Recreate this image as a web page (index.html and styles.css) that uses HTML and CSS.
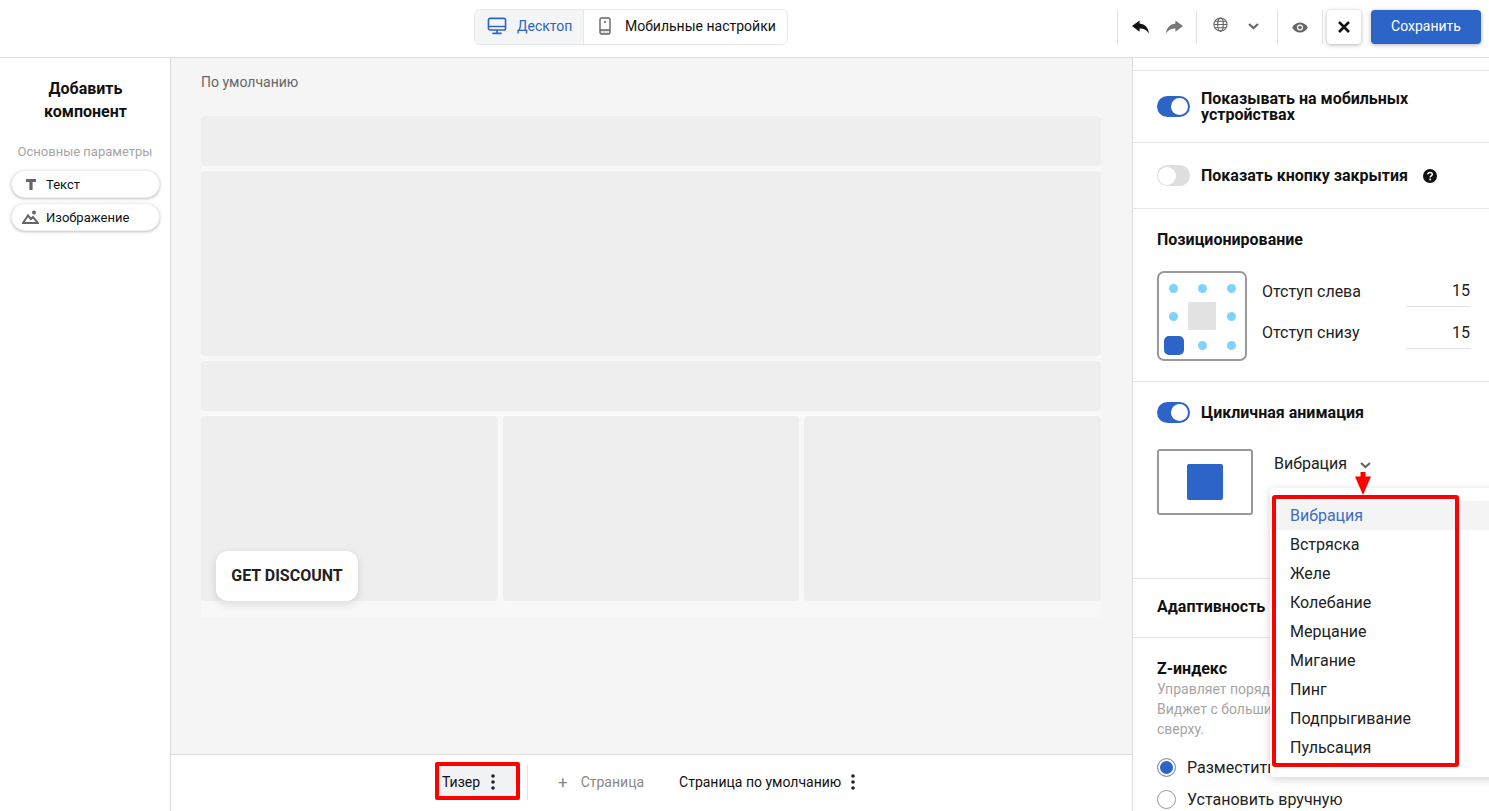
FILE: index.html
```html
<!DOCTYPE html>
<html lang="ru">
<head>
<meta charset="utf-8">
<title>Редактор</title>
<link rel="stylesheet" href="styles.css">
</head>
<body>
<div class="app">
  <header class="topbar">
    <div class="tabs">
      <div class="tab tab-active">
        <svg class="tab-icon" viewBox="0 0 22 20"><path d="M3.5 1.5h15a2 2 0 0 1 2 2v9a2 2 0 0 1-2 2h-15a2 2 0 0 1-2-2v-9a2 2 0 0 1 2-2zM1.500 10.500h19M11 14.500v3M6.500 18.200h9" fill="none" stroke="#2d64c8" stroke-width="1.800" stroke-linecap="round"/></svg>
        <span>Десктоп</span>
      </div>
      <div class="tab tab-mobile">
        <svg class="tab-icon-m" viewBox="0 0 12 18"><path d="M1 13h10v2.500A1.500 1.500 0 0 1 9.500 17h-7A1.500 1.500 0 0 1 1 15.500z" fill="#ddd"/><path d="M2.500 1h7A1.500 1.500 0 0 1 11 2.500v13A1.500 1.500 0 0 1 9.500 17h-7A1.500 1.500 0 0 1 1 15.500v-13A1.500 1.500 0 0 1 2.500 1zM1 13h10" fill="none" stroke="#666" stroke-width="1.400"/><circle cx="6" cy="5" r="1" fill="#555"/></svg>
        <span>Мобильные настройки</span>
      </div>
    </div>
    <div class="tools">
      <div class="tool-group tool-undo">
        <svg class="ic-arrow" viewBox="0 0 18 14"><path d="M8 0 0 6l8 6V8.600c4 0 7.300 1 10 5.400-.5-6-4-10-10-10.800z" fill="#111"/></svg>
        <svg class="ic-arrow" viewBox="0 0 18 14"><path d="M10 0l8 6-8 6V8.600c-4 0-7.300 1-10 5.400 .5-6 4-10 10-10.800z" fill="#777"/></svg>
      </div>
      <div class="tool-group tool-lang">
        <svg class="ic-globe" viewBox="0 0 16 16"><g fill="none" stroke="#666" stroke-width="1.200"><circle cx="8" cy="8" r="7"/><ellipse cx="8" cy="8" rx="3" ry="7"/><path d="M1 8h14M2 4.500h12M2 11.500h12"/></g></svg>
        <svg class="ic-chev ic-chev-top" viewBox="0 0 11 7"><path d="M1 1l4.500 4L10 1" fill="none" stroke="#666" stroke-width="2.200"/></svg>
      </div>
      <div class="tool-group tool-eye">
        <svg class="ic-eye" viewBox="0 0 18 12"><path d="M9 .5C5 .5 2 3 .5 6 2 9 5 11.500 9 11.500S16 9 17.500 6C16 3 13 .5 9 .5z" fill="#666"/><circle cx="9" cy="6" r="3.300" fill="#fff"/><circle cx="9" cy="6" r="2" fill="#666"/></svg>
      </div>
      <div class="tool-group tool-end"></div>
      <button class="close-btn"><svg viewBox="0 0 12 12"><path d="M1 1l10 10M11 1L1 11" stroke="#111" stroke-width="2.600" fill="none"/></svg></button>
      <button class="save-btn">Сохранить</button>
    </div>
  </header>

  <div class="main">
    <aside class="sidebar">
      <h2 class="side-title">Добавить компонент</h2>
      <div class="side-sub">Основные параметры</div>
      <div class="pill">
        <svg class="pill-ic-t" viewBox="0 0 10 11"><path d="M0 0h10v3H6.600v8H3.400V3H0z" fill="#666"/></svg>
        <span>Текст</span>
      </div>
      <div class="pill">
        <svg class="pill-ic-i" viewBox="0 0 17 14"><path d="M1 13 6 5.500l3 3.500 2-2 5 6z" fill="none" stroke="#666" stroke-width="2"/><circle cx="12" cy="2.500" r="2" fill="#666"/></svg>
        <span>Изображение</span>
      </div>
    </aside>

    <section class="center">
      <div class="canvas">
        <div class="canvas-label">По умолчанию</div>
        <div class="preview">
          <div class="block b-50"></div>
          <div class="block b-185"></div>
          <div class="block b-50"></div>
          <div class="cols">
            <div class="block"></div>
            <div class="block"></div>
            <div class="block"></div>
          </div>
          <div class="teaser">GET DISCOUNT</div>
        </div>
      </div>
      <footer class="pagebar">
        <div class="pb-teaser">
          <span>Тизер</span>
          <svg class="dots" viewBox="0 0 4 16"><circle cx="2" cy="2" r="1.800"/><circle cx="2" cy="8" r="1.800"/><circle cx="2" cy="14" r="1.800"/></svg>
        </div>
        <div class="pb-sep"></div>
        <div class="pb-add"><span class="pb-plus">+</span><span>Страница</span></div>
        <div class="pb-default">
          <span>Страница по умолчанию</span>
          <svg class="dots" viewBox="0 0 4 16"><circle cx="2" cy="2" r="1.800"/><circle cx="2" cy="8" r="1.800"/><circle cx="2" cy="14" r="1.800"/></svg>
        </div>
      </footer>
    </section>

    <aside class="panel">
      <div class="sec sec-top"></div>
      <div class="sec sec-mobile">
        <div class="toggle on"></div>
        <div class="sec-label">Показывать на мобильных устройствах</div>
      </div>
      <div class="sec sec-close">
        <div class="toggle off"></div>
        <div class="sec-label nowrap">Показать кнопку закрытия</div>
        <svg class="help" viewBox="0 0 14 14"><circle cx="7" cy="7" r="7" fill="#111"/><path d="M4.800 5.400C4.900 4.100 5.800 3.400 7 3.400c1.300 0 2.300.8 2.300 1.900 0 1.700-2.100 1.600-2.100 3.100" fill="none" stroke="#fff" stroke-width="1.500"/><circle cx="7.200" cy="10.500" r="1" fill="#fff"/></svg>
      </div>
      <div class="sec sec-pos">
        <div class="sec-title">Позиционирование</div>
        <div class="pos-row">
          <div class="pos-grid">
            <i class="dot"></i><i class="dot"></i><i class="dot"></i>
            <i class="dot"></i><i class="pos-center"></i><i class="dot"></i>
            <i class="dot-active"></i><i class="dot"></i><i class="dot"></i>
          </div>
          <div class="pos-fields">
            <div class="field"><span>Отступ слева</span><span class="field-val">15</span></div>
            <div class="field"><span>Отступ снизу</span><span class="field-val">15</span></div>
          </div>
        </div>
      </div>
      <div class="sec sec-anim">
        <div class="anim-head">
          <div class="toggle on"></div>
          <div class="sec-label">Цикличная анимация</div>
        </div>
        <div class="anim-row">
          <div class="anim-preview"><div class="anim-square"></div></div>
          <div class="anim-select">
            <span>Вибрация</span>
            <svg class="ic-chev" viewBox="0 0 11 7"><path d="M1 1l4.500 4L10 1" fill="none" stroke="#666" stroke-width="2.200"/></svg>
          </div>
        </div>
      </div>
      <div class="sec sec-adapt"><div class="sec-title">Адаптивность</div></div>
      <div class="sec-z">
        <div class="sec-title">Z-индекс</div>
        <div class="z-desc">Управляет порядком наложения.<br>Виджет с большим индексом будет<br>сверху.</div>
        <div class="radio-row"><i class="radio checked"></i><span>Разместить поверх всех</span></div>
        <div class="radio-row"><i class="radio"></i><span>Установить вручную</span></div>
      </div>

      <div class="dropdown">
        <div class="dd-item dd-active">Вибрация</div>
        <div class="dd-item">Встряска</div>
        <div class="dd-item">Желе</div>
        <div class="dd-item">Колебание</div>
        <div class="dd-item">Мерцание</div>
        <div class="dd-item">Мигание</div>
        <div class="dd-item">Пинг</div>
        <div class="dd-item">Подпрыгивание</div>
        <div class="dd-item">Пульсация</div>
      </div>
      <div class="red-box"></div>
      <svg class="red-arrow" viewBox="0 0 16 23"><path d="M5.500 0h5v4.500H16L8 23 0 4.500h5.500z" fill="#f00"/></svg>
    </aside>
  </div>
  <div class="red-teaser"></div>
</div>
</body>
</html>
```

FILE: styles.css
```css
* { box-sizing: border-box; }
html, body { margin: 0; height: 100%; overflow: hidden; }
body { font-family: Roboto, "Liberation Sans", sans-serif; color: #111; background: #fff; }
.app { position: relative; width: 1489px; height: 811px; display: flex; flex-direction: column; }

.topbar { height: 58px; flex: none; display: flex; align-items: flex-start; border-bottom: 1px solid #ddd; position: relative; }
.tabs { position: absolute; left: 474px; top: 9px; width: 314px; height: 36px; display: flex; border: 1px solid #e8e8e8; border-radius: 6px; overflow: hidden; font-size: 14px; background: #fff; }
.tab { display: flex; align-items: center; height: 100%; padding-bottom: 2px; }
.tab-active { width: 109px; background: #f4f5f7; border-right: 1px solid #e8e8e8; color: #2d64c8; padding-left: 12px; gap: 10px; }
.tab-icon { width: 20px; height: 18px; }
.tab-mobile { padding-left: 15px; gap: 14px; color: #111; }
.tab-icon-m { width: 12px; height: 18px; }

.tools { position: absolute; left: 1117px; top: 0; right: 0; height: 57px; display: flex; align-items: flex-start; }
.tool-group { height: 34px; margin-top: 10px; display: flex; align-items: center; border-left: 1px solid #e2e2e2; }
.tool-undo { width: 79px; padding-left: 14px; gap: 17px; }
.ic-arrow { width: 17px; height: 14px; margin-top: -1px; }
.tool-lang { width: 81px; padding-left: 16px; gap: 20px; }
.ic-globe { width: 15px; height: 15px; margin-top: -5px; }
.ic-chev { width: 11px; height: 7px; }
.ic-chev-top { margin-top: -2px; }
.tool-eye { width: 45px; padding-left: 13px; }
.ic-eye { width: 18px; height: 11px; }
.tool-end { width: 1px; }
.close-btn { width: 34px; height: 34px; margin-top: 10px; margin-left: 4px; padding: 0; border: 0; background: #fff; border-radius: 4px; box-shadow: 0 1px 4px rgba(0,0,0,.3); display: flex; align-items: center; justify-content: center; }
.close-btn svg { width: 12px; height: 12px; }
.save-btn { width: 110px; height: 34px; margin-top: 10px; margin-left: 10px; border: 0; background: #2d64c8; color: #fff; font: 14px Roboto, sans-serif; border-radius: 4px; box-shadow: 0 1px 4px rgba(0,0,0,.3); padding-bottom: 3px; }

.main { flex: 1; min-height: 0; display: flex; }
.sidebar { width: 171px; flex: none; border-right: 1px solid #ddd; padding: 19px 10px 0 11px; background: #fff; }
.side-title { margin: 0 auto; width: 120px; text-align: center; font-size: 16px; line-height: 23px; font-weight: 700; }
.side-sub { margin-top: 20px; margin-left: -1px; font-size: 13px; line-height: 18px; color: #a5a5a5; text-align: center; white-space: nowrap; }
.pill { width: 149px; height: 28px; margin-top: 5px; border: 1px solid #eee; border-radius: 14px; background: #fff; box-shadow: 0 1px 3px rgba(0,0,0,.25); display: flex; align-items: center; font-size: 13px; }
.side-sub + .pill { margin-top: 9px; }
.pill-ic-t { width: 10px; height: 11px; margin-left: 14px; margin-right: 10px; }
.pill-ic-i { width: 17px; height: 14px; margin-left: 10px; margin-right: 7px; }

.center { flex: 1; min-width: 0; display: flex; flex-direction: column; background: #f5f5f5; }
.canvas { flex: 1; padding: 16px 30px 0; min-height: 0; }
.canvas-label { font-size: 14px; line-height: 17px; color: #666; }
.preview { position: relative; margin-top: 25px; width: 900px; height: 501px; background: #f8f8f8; display: flex; flex-direction: column; gap: 5px; }
.block { background: #eee; border-radius: 4px; }
.b-50 { height: 50px; }
.b-185 { height: 185px; }
.cols { display: grid; grid-template-columns: 297px 296px 297px; gap: 5px; height: 185px; }
.teaser { position: absolute; left: 15px; top: 435px; width: 142px; height: 50px; padding-bottom: 2px; background: #fff; border-radius: 12px; box-shadow: 0 3px 10px rgba(0,0,0,.12); display: flex; align-items: center; justify-content: center; font-size: 16px; font-weight: 700; color: #222; }

.pagebar { height: 57px; flex: none; background: #fff; border-top: 1px solid #ddd; display: flex; align-items: center; font-size: 14px; padding-left: 265px; padding-bottom: 2px; }
.pb-teaser { width: 84px; height: 35px; background: #f1f2f4; display: flex; align-items: center; padding-left: 6px; gap: 10px; }
.dots { width: 6px; height: 16px; fill: #222; }
.pb-sep { width: 1px; height: 35px; background: #e2e2e2; margin-left: 7px; }
.pb-add { margin-left: 30px; display: flex; align-items: center; gap: 13px; color: #888; }
.pb-plus { font-size: 17px; line-height: 1; }
.pb-default { margin-left: 35px; display: flex; align-items: center; gap: 9px; }

.panel { position: relative; width: 357px; flex: none; background: #fff; border-left: 1px solid #ddd; overflow: hidden; }
.sec { border-bottom: 1px solid #e6e6e6; padding-left: 24px; }
.sec-top { height: 13px; }
.sec-mobile { height: 72px; display: flex; align-items: center; }
.sec-close { height: 66px; display: flex; align-items: center; }
.sec-label { width: 230px; margin-left: 11px; font-size: 16px; line-height: 16px; font-weight: 700; }
.nowrap { width: auto; white-space: nowrap; }
.help { width: 14px; height: 14px; margin-left: 15px; margin-top: 1px; }
.toggle { position: relative; width: 33px; height: 21px; border-radius: 11px; flex: none; }
.toggle::after { content: ""; position: absolute; top: 2px; width: 17px; height: 17px; border-radius: 50%; background: #fff; }
.toggle.on { background: #2d64c8; }
.toggle.on::after { right: 2px; }
.toggle.off { background: #dedede; }
.toggle.off::after { left: 1px; width: 18px; height: 18px; top: 1.5px; }

.sec-pos { height: 173px; padding-top: 22px; }
.sec-title { font-size: 16px; line-height: 18px; font-weight: 700; }
.pos-row { display: flex; margin-top: 22px; }
.pos-grid { width: 90px; height: 90px; border: 2px solid #999; border-radius: 7px; padding-top: 1px; display: grid; grid-template-columns: repeat(3, 29px); grid-template-rows: repeat(3, 28.5px); justify-items: center; align-items: center; }
.dot { width: 9px; height: 9px; border-radius: 50%; background: #7dd3fc; }
.pos-center { width: 28px; height: 28px; margin: -1px 0 0 -1px; background: #e2e2e2; }
.dot-active { width: 20px; height: 19px; border-radius: 5px; background: #2d64c8; }
.pos-fields { margin-left: 15px; width: 208px; }
.field { display: flex; justify-content: space-between; align-items: center; height: 42px; font-size: 16px; color: #222; position: relative; padding-top: 8px; }
.field:first-child { height: 36px; padding-top: 3px; }
.field span:first-child { padding-top: 1px; }
.field-val { width: 64px; text-align: right; }
.field::after { content: ""; position: absolute; right: 0; bottom: 0; width: 64px; height: 1px; background: #e2e2e2; }

.sec-anim { height: 197px; padding-top: 20px; }
.anim-head { display: flex; align-items: center; }
.anim-row { display: flex; margin-top: 26px; }
.anim-preview { width: 96px; height: 66px; border: 2px solid #999; border-radius: 3px; display: flex; align-items: center; justify-content: center; }
.anim-square { width: 36px; height: 36px; background: #2d64c8; border-radius: 2px; }
.anim-select { margin-left: 21px; margin-top: 4px; font-size: 16px; display: flex; align-items: center; gap: 13px; height: 20px; color: #222; }
.anim-select .ic-chev { margin-top: 4px; }

.sec-adapt { height: 59px; padding-top: 19px; }
.sec-z { padding: 22px 0 0 24px; }
.z-desc { margin-top: 1px; font-size: 14px; line-height: 20px; color: #a5a5a5; white-space: nowrap; }
.radio-row { display: flex; align-items: center; gap: 11px; font-size: 16px; height: 20px; margin-top: 12px; white-space: nowrap; color: #222; }
.z-desc + .radio-row { margin-top: 18px; }
.radio { width: 19px; height: 19px; border: 1px solid #999; border-radius: 50%; background: #fff; flex: none; }
.radio.checked { background: #2d64c8; box-shadow: inset 0 0 0 2px #fff; }

.dropdown { position: absolute; left: 137px; top: 430px; width: 240px; height: 289px; background: #fff; border-radius: 4px; box-shadow: 0 2px 8px rgba(0,0,0,.18); padding-top: 13px; }
.dd-item { height: 29px; padding-left: 20px; font-size: 16px; line-height: 29px; color: #222; }
.dd-active { background: #f4f4f4; color: #3c6cc4; }
.red-box { position: absolute; left: 139px; top: 437px; width: 187px; height: 272px; border: 4px solid #f00; border-radius: 3px; }
.red-arrow { position: absolute; left: 222px; top: 414px; width: 16px; height: 23px; }
.red-teaser { position: absolute; left: 435px; top: 762px; width: 85px; height: 38px; border: 4px solid #f00; border-radius: 2px; }
```
